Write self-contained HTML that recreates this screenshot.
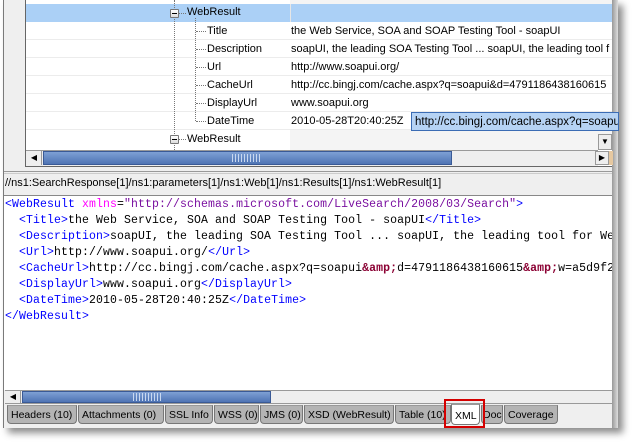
<!DOCTYPE html>
<html><head><style>
*{margin:0;padding:0;box-sizing:border-box}
body{width:634px;height:443px;background:#fff;position:relative;overflow:hidden;font-family:"Liberation Sans",sans-serif;font-size:11px}
.abs{position:absolute}
.frame{left:3px;top:0;width:615px;height:428px;background:#efefef;border-left:1px solid #7a7a7a;box-shadow:5px 5px 7px rgba(0,0,0,.45)}
.row{position:absolute;left:26px;width:586px;height:18px;border-bottom:1px solid #ececec;background:#fff}
.k{position:absolute;top:3px}
.v{position:absolute;top:3px;white-space:nowrap}
.dv{position:absolute;border-left:1px dotted #777}
.dh{position:absolute;border-top:1px dotted #777;height:0}
.mb{position:absolute;width:9px;height:9px;border:1px solid #777;background:linear-gradient(#fff,#ddd);border-radius:1px}
.mb:after{content:"";position:absolute;left:1px;top:3px;width:5px;height:1px;background:#000}
.xml{font-family:"Liberation Mono",monospace;font-size:11.5px;letter-spacing:0.1px;white-space:pre;position:absolute;left:5px;line-height:16px}
.t{color:#0000ff}.a{color:#ff00ff}.s{color:#7a10a0}.e{color:#8b0033;font-weight:bold}
.tab{position:absolute;top:405px;height:19px;background:#b4b4b4;border:1px solid #777;border-top-color:#999;border-radius:0 0 4px 4px;padding:3px 0 0 3px;font-size:10.5px;white-space:nowrap;overflow:hidden}
</style></head><body>
<div class="abs frame"></div>
<div class="abs" style="left:612px;top:0;width:6px;height:428px;background:linear-gradient(90deg,#999,#ddd)"></div>
<!-- tree area -->
<div class="abs" style="left:25px;top:0;width:587px;height:167px;background:#fff;border-left:1px solid #666;border-bottom:1px solid #666"></div>
<div class="abs" style="left:26px;top:4px;width:586px;height:18px;background:#abd0f6"></div>
<div class="abs" style="left:290px;top:0;width:1px;height:150px;background:#e6e6e6"></div>
<div class="abs" style="left:26px;top:0;width:264px;height:4px;background:#fff"></div>
<div class="abs" style="left:290px;top:0;width:322px;height:4px;background:#f4f4f4"></div>
<div class="row" style="top:22px"><span class="k" style="left:181px">Title</span><span class="v" style="left:265px">the Web Service, SOA and SOAP Testing Tool - soapUI</span></div>
<div class="row" style="top:40px"><span class="k" style="left:181px">Description</span><span class="v" style="left:265px">soapUI, the leading SOA Testing Tool ... soapUI, the leading tool f</span></div>
<div class="row" style="top:58px"><span class="k" style="left:181px">Url</span><span class="v" style="left:265px">http://www.soapui.org/</span></div>
<div class="row" style="top:76px"><span class="k" style="left:181px">CacheUrl</span><span class="v" style="left:265px">http://cc.bingj.com/cache.aspx?q=soapui&amp;d=4791186438160615</span></div>
<div class="row" style="top:94px"><span class="k" style="left:181px">DisplayUrl</span><span class="v" style="left:265px">www.soapui.org</span></div>
<div class="row" style="top:112px"><span class="k" style="left:181px">DateTime</span><span class="v" style="left:265px">2010-05-28T20:40:25Z</span></div>
<div class="row" style="top:130px;background:#f4f4f4;height:20px;border:0"><div style="position:absolute;left:0;top:0;width:264px;height:20px;background:#fff"></div></div>
<div class="abs" style="left:187px;top:6px">WebResult</div>
<div class="abs" style="left:187px;top:133px">WebResult</div>
<div class="dv" style="left:174px;top:0;height:150px"></div>
<div class="dv" style="left:195px;top:18px;height:103px"></div>
<div class="dh" style="left:178px;top:13px;width:8px"></div>
<div class="dh" style="left:178px;top:139px;width:8px"></div>
<div class="dh" style="left:196px;top:31px;width:10px"></div>
<div class="dh" style="left:196px;top:49px;width:10px"></div>
<div class="dh" style="left:196px;top:67px;width:10px"></div>
<div class="dh" style="left:196px;top:85px;width:10px"></div>
<div class="dh" style="left:196px;top:103px;width:10px"></div>
<div class="dh" style="left:196px;top:121px;width:10px"></div>
<div class="mb" style="left:170px;top:9px"></div>
<div class="mb" style="left:170px;top:135px"></div>
<!-- vertical scroll bits -->
<div class="abs" style="left:598px;top:134px;width:14px;height:16px;background:#eee;border:1px solid #999;font-size:8px;text-align:center;line-height:14px">▼</div>
<!-- tooltip -->
<div class="abs" style="left:411px;top:112px;width:208px;height:19px;background:#b6d3f4;border:1px solid #3b6cb4;padding:3px 0 0 3px;font-size:11.5px;white-space:nowrap;overflow:hidden">http://cc.bingj.com/cache.aspx?q=soapui&amp;</div>
<!-- horizontal scrollbar tree -->
<div class="abs" style="left:26px;top:150px;width:572px;height:16px;background:#eee;border-top:1px solid #999"></div>
<div class="abs" style="left:27px;top:151px;width:15px;height:14px;background:#eee;border-right:1px solid #999;font-size:8px;line-height:14px;text-align:center">◀</div>
<div class="abs" style="left:43px;top:151px;width:409px;height:14px;background:linear-gradient(#7ea0d4,#4f74b4);border:1px solid #3a5a96"></div>
<div class="abs" style="left:232px;top:154px;width:28px;height:8px;background:repeating-linear-gradient(90deg,#c8d8f0 0 1px,transparent 1px 3px)"></div>
<div class="abs" style="left:595px;top:151px;width:14px;height:14px;background:#eee;border:1px solid #999;font-size:8px;line-height:12px;text-align:center">▶</div>
<div class="abs" style="left:609px;top:151px;width:4px;height:14px;background:#e6c8a0"></div>
<!-- divider + path -->
<div class="abs" style="left:4px;top:171px;width:608px;height:1px;background:#999"></div>
<div class="abs" style="left:4px;top:173px;width:608px;height:1px;background:#ccc"></div>
<div class="abs" style="left:5px;top:177px;font-size:11px">//ns1:SearchResponse[1]/ns1:parameters[1]/ns1:Web[1]/ns1:Results[1]/ns1:WebResult[1]</div>
<!-- xml area -->
<div class="abs" style="left:4px;top:195px;width:608px;height:195px;background:#fff;border-top:1px solid #888;overflow:hidden">
<div class="xml" style="top:1px;left:1px"><span class="t">&lt;WebResult </span><span class="a">xmlns</span>=<span class="s">"http://schemas.microsoft.com/LiveSearch/2008/03/Search"</span><span class="t">&gt;</span>
  <span class="t">&lt;Title&gt;</span>the Web Service, SOA and SOAP Testing Tool - soapUI<span class="t">&lt;/Title&gt;</span>
  <span class="t">&lt;Description&gt;</span>soapUI, the leading SOA Testing Tool ... soapUI, the leading tool for Web
  <span class="t">&lt;Url&gt;</span>http://www.soapui.org/<span class="t">&lt;/Url&gt;</span>
  <span class="t">&lt;CacheUrl&gt;</span>http://cc.bingj.com/cache.aspx?q=soapui<span class="e">&amp;amp;</span>d=4791186438160615<span class="e">&amp;amp;</span>w=a5d9f22
  <span class="t">&lt;DisplayUrl&gt;</span>www.soapui.org<span class="t">&lt;/DisplayUrl&gt;</span>
  <span class="t">&lt;DateTime&gt;</span>2010-05-28T20:40:25Z<span class="t">&lt;/DateTime&gt;</span>
<span class="t">&lt;/WebResult&gt;</span></div></div>
<!-- bottom scrollbar -->
<div class="abs" style="left:5px;top:390px;width:607px;height:14px;background:#eee;border-top:1px solid #999;border-bottom:1px solid #999"></div>
<div class="abs" style="left:6px;top:391px;width:15px;height:12px;font-size:8px;line-height:12px;text-align:center;border-right:1px solid #999">◀</div>
<div class="abs" style="left:22px;top:391px;width:249px;height:12px;background:linear-gradient(#7ea0d4,#4f74b4);border:1px solid #3a5a96"></div>
<div class="abs" style="left:133px;top:393px;width:28px;height:8px;background:repeating-linear-gradient(90deg,#c8d8f0 0 1px,transparent 1px 3px)"></div>
<!-- tabs -->
<div class="tab" style="left:7px;width:70px">Headers (10)</div>
<div class="tab" style="left:78px;width:86px">Attachments (0)</div>
<div class="tab" style="left:165px;width:48px">SSL Info</div>
<div class="tab" style="left:214px;width:45px">WSS (0)</div>
<div class="tab" style="left:260px;width:43px">JMS (0)</div>
<div class="tab" style="left:304px;width:90px">XSD (WebResult)</div>
<div class="tab" style="left:395px;width:56px">Table (10)</div>
<div class="tab" style="left:451px;width:29px;background:#fff;top:404px;height:21px;padding-top:5px">XML</div>
<div class="tab" style="left:481px;width:22px;padding-left:1px">Doc</div>
<div class="tab" style="left:504px;width:54px">Coverage</div>
<div class="abs" style="left:444px;top:399px;width:41px;height:29px;border:2px solid #d40000"></div>
</body></html>
